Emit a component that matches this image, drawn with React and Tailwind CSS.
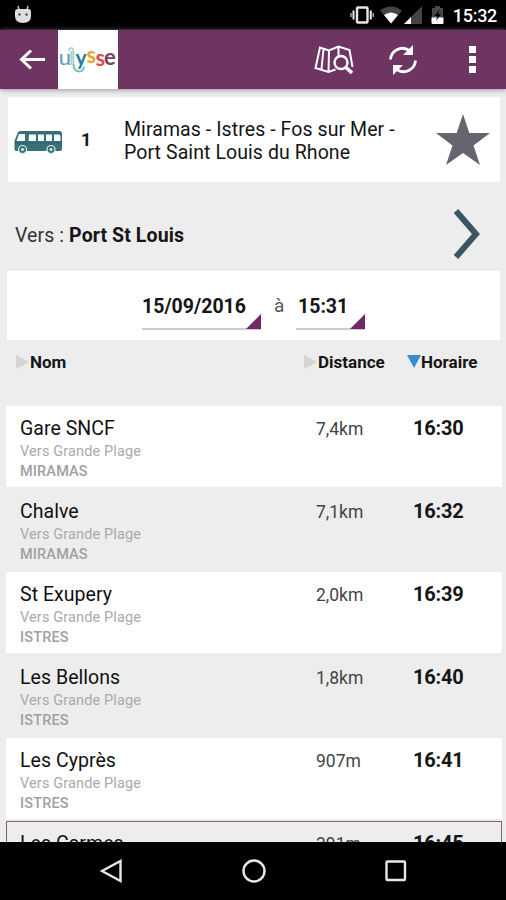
import React from "react";

const stops = [
  { name: "Gare SNCF", city: "MIRAMAS", distance: "7,4km", time: "16:30" },
  { name: "Chalve", city: "MIRAMAS", distance: "7,1km", time: "16:32" },
  { name: "St Exupery", city: "ISTRES", distance: "2,0km", time: "16:39" },
  { name: "Les Bellons", city: "ISTRES", distance: "1,8km", time: "16:40" },
  { name: "Les Cyprès", city: "ISTRES", distance: "907m", time: "16:41" },
  { name: "Les Carmes", city: "", distance: "391m", time: "16:45", selected: true },
];

function StatusBar() {
  return (
    <header className="flex h-[30px] shrink-0 items-center bg-black pl-3.5 pr-[9px] text-white">
      <svg width="18" height="22" viewBox="0 0 18 22">
        <path d="M5 6 4 2M13 6l1-4" stroke="#c5c5c5" strokeWidth="1.500" />
        <path d="M1 8Q1 5 4 5h10q3 0 3 3v4q0 7-8 7t-8-7Z" fill="#dedede" />
        <circle cx="5.500" cy="10.500" r="1.200" fill="#444" />
        <circle cx="12.500" cy="10.500" r="1.200" fill="#444" />
      </svg>
      <svg className="ml-auto" width="24" height="20" viewBox="0 0 24 20">
        <rect x="7" y="2.500" width="10.500" height="15" rx="1" fill="none" stroke="#e8e8e8" strokeWidth="2.400" />
        <path d="M3.500 5.500v9M20.800 5.500v9" stroke="#e8e8e8" strokeWidth="2" />
        <path d="M1 8v4M23.300 8v4" stroke="#aaa" strokeWidth="1.500" />
      </svg>
      <svg className="ml-[6px]" width="22" height="20" viewBox="0 0 22 20">
        <path d="M0 5.500Q11-2.500 22 5.500L11 18.500Z" fill="#444" />
        <path d="M4 10Q11 5 18 10l-7 8.500Z" fill="#fff" />
      </svg>
      <svg className="ml-[1px]" width="20" height="20" viewBox="0 0 20 20">
        <path d="M19 1v18H1Z" fill="#444" />
        <path d="M8 12V19H1Z" fill="#fff" />
      </svg>
      <svg className="ml-[8px]" width="13" height="20" viewBox="0 0 13 20">
        <path d="M1 3h3V1h5v2h3v10H1Z" fill="#484848" />
        <path d="M0.500 12.500h12V18a1 1 0 0 1-1 1h-10a1 1 0 0 1-1-1Z" fill="#fff" />
        <path d="M8.500 4.500 3.500 11h3L5 16l5-7H7Z" fill="#000" />
      </svg>
      <span className="ml-[9px] mt-[2px] text-[18px] font-medium leading-none tracking-[-0.300px]">15:32</span>
    </header>
  );
}

function UlysseLogo() {
  return (
    <svg className="ml-[13px] bg-white" width="60" height="59" viewBox="0 0 60 59">
      <path d="M11 21q0-3 2.500-3 2 0 2 4v12" fill="none" stroke="#9ed1c6" strokeWidth="1.600" />
      <path d="M15.500 34q0 7.500 6 7.500 4 0 4.500-5" fill="none" stroke="#74c5bb" strokeWidth="2" />
      <g fontFamily="Lato, sans-serif" fontSize="22">
        <text x="0.800" y="35" fill="#6994b5">u</text>
        <text x="11" y="34.500" fill="#9ed1c6" fontSize="20">l</text>
        <text x="17.500" y="35" fill="#287f94" fontWeight="700" fontSize="21">y</text>
        <text x="28.500" y="33" fill="#eba62c" fontWeight="700">s</text>
        <text x="37.500" y="36" fill="#e34a50" fontWeight="700">s</text>
        <text x="46" y="34.500" fill="#74445f" fontWeight="700">e</text>
      </g>
    </svg>
  );
}

function Toolbar() {
  return (
    <div className="relative z-10 flex h-[59px] shrink-0 items-center bg-[#6e3562] pl-[19px] pr-[30px] shadow-[0_1px_5px_#a090a0]">
      <svg width="26" height="20" viewBox="0 0 26 20" fill="none" stroke="#fff" strokeWidth="3">
        <path d="M12 0.500 2.500 9.500 12 18.500M2.500 9.500H26" />
      </svg>
      <UlysseLogo />
      <svg className="ml-auto" width="40" height="32" viewBox="0 0 40 32" fill="none" stroke="#fff" strokeWidth="2">
        <path d="M21.500 25.500 14.500 28 1.500 24 6 3.500 15 6.500 24.500 2.500 35.500 6 38.500 23M15 6.500 14.500 28M24.500 3V12M9.500 5 7.500 25" />
        <circle cx="27" cy="18.500" r="6.500" strokeWidth="2.400" />
        <path d="m31.500 23 6.500 6" strokeWidth="3.600" />
      </svg>
      <svg className="ml-[34px]" width="30" height="30" viewBox="0 0 30 30" fill="none" stroke="#fff" strokeWidth="2.800">
        <path d="M2.500 14.500A12 12 0 0 1 20.500 5M27.500 15.500A12 12 0 0 1 9.500 25" />
        <path d="M25 0v10H15ZM5 30v-10H15Z" fill="#fff" stroke="none" />
      </svg>
      <div className="ml-[51px] flex flex-col gap-[3px]">
        <i className="size-[7px] bg-white" />
        <i className="size-[7px] bg-white" />
        <i className="size-[7px] bg-white" />
      </div>
    </div>
  );
}

function BusIcon() {
  return (
    <svg width="50" height="24" viewBox="0 0 50 24">
      <path d="M4 1Q5 0 8 0h37q3 0 3 3v15q0 2-2 2H2q-1.500 0-1.500-2v-8Z" fill="#397078" />
      <path d="M5 3h6v7H2.500Z" fill="#f4fafa" />
      <path d="M15 3.500h7v6.500h-7.500Zm9 0h6v6.500h-6Zm8 0h6v6.500h-6Zm8 0h4.500q2 0 2 2V10H40Z" fill="#f4fafa" />
      <path d="M1 12h47" stroke="#25626c" strokeWidth="1" />
      <g fill="#397078" stroke="#dceeee" strokeWidth="1.200">
        <circle cx="8.500" cy="18.500" r="4" />
        <circle cx="37" cy="18.500" r="4" />
      </g>
      <circle cx="8.500" cy="18.500" r="1.500" fill="#dceeee" />
      <circle cx="37" cy="18.500" r="1.500" fill="#dceeee" />
    </svg>
  );
}

function Spinner({ children, className }) {
  return (
    <div className={`flex h-[40px] items-end justify-between border-b-2 border-[#d2c8d0] ${className}`}>
      <span className="self-start whitespace-nowrap pt-[5px] text-[19.500px] font-bold leading-6">{children}</span>
      <svg className="-mb-[1px] -ml-4 shrink-0" width="15" height="15" viewBox="0 0 15 15">
        <path d="M15 0v15H0Z" fill="#702965" />
      </svg>
    </div>
  );
}

function StopRow({ stop, index }) {
  const background = stop.selected
    ? "border border-[#8b5c6c] pl-[13px] pt-[9px]"
    : index % 2 === 0
      ? "bg-white pl-[14px] pt-[10px] border-b-2 border-[#ededed]"
      : "pl-[14px] pt-[10px]";
  return (
    <li className={`mr-[4px] ml-[6px] flex h-[83px] shrink-0 ${background}`}>
      <div className="w-[296px]">
        <p className="mt-px text-[19.500px] leading-6 tracking-[0.050px] text-[#111]">{stop.name}</p>
        {stop.city && (
          <>
            <p className="mt-[1px] text-[14.500px] leading-[19px] tracking-[0.130px] text-[#aaa]">Vers Grande Plage</p>
            <p className="mt-px text-[14.500px] font-medium leading-5 tracking-[0.150px] text-[#a0a0a0]">{stop.city}</p>
          </>
        )}
      </div>
      <p className="w-[97px] pt-[1px] text-[17.500px] leading-6 text-[#444]">{stop.distance}</p>
      <p className="text-[20px] font-bold leading-6 tracking-[-0.200px] text-[#161616]">{stop.time}</p>
    </li>
  );
}

export default function App() {
  return (
    <main className="flex h-[900px] w-[506px] flex-col overflow-hidden bg-[#ededed] font-[Roboto,sans-serif] text-[#151515]">
      <StatusBar />
      <Toolbar />

      <section className="ml-2 mr-1.5 mt-2 flex h-[85px] shrink-0 items-center bg-white">
        <div className="ml-[6px] mt-[7px] w-[67px]"><BusIcon /></div>
        <span className="w-[43px] text-[18px] font-bold">1</span>
        <p className="mt-[3px] whitespace-nowrap text-[19.500px] leading-[23px] tracking-[0.080px]">
          Miramas - Istres - Fos sur Mer -<br />Port Saint Louis du Rhone
        </p>
        <svg className="ml-auto mr-[10px]" width="54" height="51" viewBox="0 0 54 51">
          <path d="m27 0 6.300 19H54L37.500 31.500 44 51 27 39 10 51l6.500-19.500L0 19h20.700Z" fill="#66656f" />
        </svg>
      </section>

      <section className="flex h-[89px] shrink-0 items-center pl-[15px] pr-[26px]">
        <p className="mt-[19px] text-[19.500px] leading-6 tracking-[0.100px]">
          <span className="text-[#333]">Vers : </span><span className="font-bold">Port St Louis</span>
        </p>
        <svg className="ml-auto mt-[15px]" width="27" height="50" viewBox="0 0 27 50">
          <path d="m3 2 20 23L3 48" fill="none" stroke="#3b5562" strokeWidth="6" />
        </svg>
      </section>

      <section className="ml-[7px] mr-1.5 flex h-[69px] shrink-0 bg-white pl-[135px] pt-[19px]">
        <Spinner className="w-[119px]">15/09/2016</Spinner>
        <span className="ml-[13px] w-[22px] pt-[4px] text-[19px] leading-6 text-[#555]">à</span>
        <Spinner className="w-[69px] pl-[2px]">15:31</Spinner>
      </section>

      <section className="flex h-[66px] shrink-0 items-start pl-4 pt-[10px] text-[17px] font-bold leading-6">
        <div className="flex w-[288px] items-center">
          <svg width="14" height="14" viewBox="0 0 14 14"><path d="M0 0v14L13 7Z" fill="#d5d5d5" /></svg>Nom
        </div>
        <div className="flex w-[103px] items-center">
          <svg width="14" height="14" viewBox="0 0 14 14"><path d="M0 0v14L13 7Z" fill="#d5d5d5" /></svg>Distance
        </div>
        <div className="flex items-center">
          <svg width="14" height="14" viewBox="0 0 14 14"><path d="M0 0h14L7 13Z" fill="#348ed0" /></svg>Horaire
        </div>
      </section>

      <ul className="flex min-h-0 flex-1 flex-col overflow-hidden">
        {stops.map((stop, index) => <StopRow key={stop.name} stop={stop} index={index} />)}
      </ul>

      <nav className="flex h-[58px] shrink-0 items-center bg-black pl-[100px] pr-[99px]">
        <svg width="23" height="24" viewBox="0 0 23 24"><path d="M20.500 2v20L2 12Z" fill="none" stroke="#e8e8e8" strokeWidth="2.400" /></svg>
        <svg className="ml-[119px]" width="24" height="24" viewBox="0 0 24 24"><circle cx="12" cy="12" r="10.500" fill="none" stroke="#e8e8e8" strokeWidth="2.400" /></svg>
        <svg className="ml-auto" width="22" height="22" viewBox="0 0 22 22"><rect x="1.500" y="1.500" width="18.500" height="18.500" rx="1" fill="none" stroke="#e8e8e8" strokeWidth="2.400" /></svg>
      </nav>
    </main>
  );
}
